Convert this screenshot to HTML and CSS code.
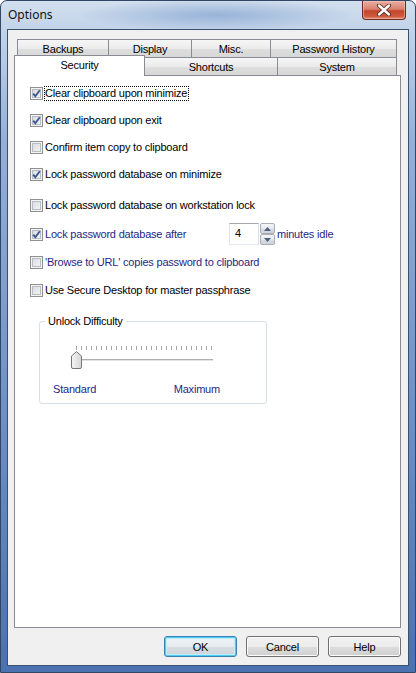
FILE: index.html
```html
<!DOCTYPE html>
<html>
<head>
<meta charset="utf-8">
<link rel="stylesheet" href="styles.css">
</head>
<body>
<div class="window">
  <div class="titlebar">
    <span class="title">Options</span>
    <div class="close">
      <svg width="16" height="12" viewBox="0 0 16 12">
        <path d="M3 1.5 L13 10.5 M13 1.5 L3 10.5" stroke="#5a2a22" stroke-width="4.2" stroke-linecap="round" fill="none"/>
        <path d="M3 1.5 L13 10.5 M13 1.5 L3 10.5" stroke="#ffffff" stroke-width="2.4" stroke-linecap="round" fill="none"/>
      </svg>
    </div>
  </div>
  <div class="client">
    <div class="tabs">
      <div class="tabrow back">
        <div class="tab w-backups">Backups</div>
        <div class="tab w-display">Display</div>
        <div class="tab w-misc">Misc.</div>
        <div class="tab w-history">Password History</div>
      </div>
      <div class="tabrow front">
        <div class="tab selected w-security">Security</div>
        <div class="tab w-shortcuts">Shortcuts</div>
        <div class="tab w-system">System</div>
      </div>
    </div>
    <div class="panel">
      <div class="opt r1"><span class="cb checked"><svg width="11" height="11" viewBox="0 0 11 11"><path d="M2.2 5.6 L4.3 8.2 L8.8 2.2" stroke="#3b5794" stroke-width="1.9" fill="none"/></svg></span><span class="lbl focus">Clear clipboard upon minimize</span></div>
      <div class="opt"><span class="cb checked"><svg width="11" height="11" viewBox="0 0 11 11"><path d="M2.2 5.6 L4.3 8.2 L8.8 2.2" stroke="#3b5794" stroke-width="1.9" fill="none"/></svg></span><span class="lbl">Clear clipboard upon exit</span></div>
      <div class="opt"><span class="cb"></span><span class="lbl">Confirm item copy to clipboard</span></div>
      <div class="opt"><span class="cb checked"><svg width="11" height="11" viewBox="0 0 11 11"><path d="M2.2 5.6 L4.3 8.2 L8.8 2.2" stroke="#3b5794" stroke-width="1.9" fill="none"/></svg></span><span class="lbl">Lock password database on minimize</span></div>
      <div class="opt r5"><span class="cb"></span><span class="lbl">Lock password database on workstation lock</span></div>
      <div class="opt r6"><span class="cb checked"><svg width="11" height="11" viewBox="0 0 11 11"><path d="M2.2 5.6 L4.3 8.2 L8.8 2.2" stroke="#3b5794" stroke-width="1.9" fill="none"/></svg></span><span class="lbl navy idle-lbl">Lock password database after</span>
        <div class="spin">
          <div class="edit">4</div>
          <div class="spinbtns">
            <div class="sb"><svg width="7" height="4" viewBox="0 0 7 4"><path d="M0 4 L3.5 0 L7 4 Z" fill="#4c607f"/></svg></div>
            <div class="sb"><svg width="7" height="4" viewBox="0 0 7 4"><path d="M0 0 L3.5 4 L7 0 Z" fill="#4c607f"/></svg></div>
          </div>
        </div>
        <span class="navy minutes">minutes idle</span>
      </div>
      <div class="opt r7"><span class="cb"></span><span class="lbl navy">'Browse to URL' copies password to clipboard</span></div>
      <div class="opt r8"><span class="cb"></span><span class="lbl">Use Secure Desktop for master passphrase</span></div>
      <fieldset class="group">
        <legend>Unlock Difficulty</legend>
        <div class="slider">
          <div class="ticks"></div>
          <div class="track"></div>
          <div class="thumb">
            <svg width="11" height="18" viewBox="0 0 11 18">
              <defs><linearGradient id="tg" x1="0" y1="0" x2="1" y2="0"><stop offset="0" stop-color="#f4f4f4"/><stop offset="1" stop-color="#d6d6d6"/></linearGradient></defs>
              <path d="M0.5 5 L5.5 0.6 L10.5 5 V16 Q10.5 17.5 9 17.5 H2 Q0.5 17.5 0.5 16 Z" fill="url(#tg)" stroke="#767676"/>
            </svg>
          </div>
        </div>
        <div class="slabels"><span class="navy">Standard</span><span class="navy">Maximum</span></div>
      </fieldset>
    </div>
    <div class="buttons">
      <div class="btn default">OK</div>
      <div class="btn">Cancel</div>
      <div class="btn">Help</div>
    </div>
  </div>
</div>
</body>
</html>
```

FILE: styles.css
```css
* { box-sizing: border-box; }
html, body { margin: 0; padding: 0; background: #ffffff; }
body {
  font-family: "Liberation Sans", Arial, sans-serif;
  font-size: 11px;
  letter-spacing: -0.2px;
  color: #000;
}
.window {
  width: 416px;
  height: 673px;
  border: 1px solid #324766;
  border-radius: 7px 7px 0 0;
  display: flex;
  flex-direction: column;
  background:
    radial-gradient(ellipse 140px 16px at 52% 14px, rgba(110,148,200,0.55), rgba(110,148,200,0) 100%),
    linear-gradient(180deg, #d2dfee 0px, #c3d4e9 28px, #93b0d8 140px, #6f92c6 400px, #4a71b0 672px);
  overflow: hidden;
}
.titlebar {
  height: 28px;
  display: flex;
  justify-content: space-between;
  align-items: flex-start;
}
.title {
  font-family: "Noto Sans", "Open Sans", sans-serif;
  font-size: 12px;
  letter-spacing: 0;
  padding: 5px 0 0 7px;
  color: #111;
}
.close {
  width: 44px;
  height: 19px;
  margin-right: 9px;
  border: 1px solid #6b2a22;
  border-top: none;
  border-radius: 0 0 4px 4px;
  background: linear-gradient(180deg, #e9ada0 0%, #d98270 45%, #c2452c 55%, #cf5a3e 85%, #e0917c 100%);
  display: flex;
  align-items: center;
  justify-content: center;
  box-shadow: inset 0 0 0 1px rgba(255,210,200,0.45);
}
.client {
  flex: 1;
  margin: 0 6px 6px;
  border: 1px solid #3b5070;
  background: #f0f0f0;
  display: flex;
  flex-direction: column;
  padding: 9px 7px 0 6px;
}
.tabs { display: flex; flex-direction: column; }
.tabrow { display: flex; height: 18px; }
.tabrow.back { margin-left: 3px; }
.tabrow.front { align-items: flex-end; }
.tab {
  height: 18px;
  border: 1px solid #898c95;
  border-bottom: none;
  margin-left: -1px;
  background: linear-gradient(180deg, #f6f6f6 0%, #ebebeb 50%, #dedede 52%, #d8d8d8 100%);
  display: flex;
  align-items: center;
  justify-content: center;
  padding-top: 1px;
}
.tab:first-child { margin-left: 0; }
.tab.selected {
  height: 21px;
  margin-top: -2px;
  margin-bottom: -1px;
  background: #ffffff;
  position: relative;
  z-index: 1;
  padding-top: 0;
  padding-bottom: 3px;
}
.w-backups { width: 92px; }
.w-display { width: 84px; }
.w-misc { width: 80px; }
.w-history { width: 127px; }
.w-security { width: 131px; }
.w-shortcuts { width: 134px; }
.w-system { width: 120px; }
.panel {
  flex: 1;
  background: #ffffff;
  border: 1px solid #898c95;
  padding: 9px 0 0 15px;
  display: flex;
  flex-direction: column;
}
.opt {
  display: flex;
  align-items: center;
  height: 16px;
  margin-top: 11px;
}
.opt.r1 { margin-top: 0; }
.opt.r5 { margin-top: 15px; }
.opt.r6 { margin-top: 10px; height: 22px; }
.opt.r7 { margin-top: 9px; }
.opt.r8 { margin-top: 12px; }
.cb {
  width: 13px;
  height: 13px;
  flex: none;
  border: 1px solid #8e8f8f;
  background: linear-gradient(135deg, #d2d5da 0%, #e6e8eb 50%, #f8f8f8 100%);
  box-shadow: inset 0 0 0 1px #f4f4f4, inset 0 0 0 2px #b9bdc3;
  margin-right: 1px;
  display: flex;
  align-items: center;
  justify-content: center;
}
.cb svg { display: block; }
.lbl {
  border: 1px solid transparent;
  line-height: 13px;
  padding: 0 1px 0 0;
  white-space: nowrap;
}
.lbl.focus { border: 1px dotted #000; }
.navy { color: #1f1f85; }
.idle-lbl { width: 185px; }
.spin { display: flex; align-items: stretch; height: 22px; }
.edit {
  width: 30px;
  height: 22px;
  border: 1px solid #abadb3;
  border-top-color: #a3a6ad;
  border-left-color: #e2e3ea;
  border-bottom-color: #e3e9ef;
  border-right-color: #dbdfe6;
  padding: 3px 0 0 5px;
  line-height: 13px;
  background: #fff;
}
.spinbtns {
  display: flex;
  flex-direction: column;
  justify-content: space-between;
  width: 15px;
  margin-left: 1px;
}
.sb {
  height: 11px;
  border: 1px solid #a8adb6;
  border-radius: 2px;
  background: linear-gradient(180deg, #f5f6f8 0%, #e6e8ec 50%, #d9dde3 51%, #cfd4db 100%);
  display: flex;
  align-items: center;
  justify-content: center;
}
.sb svg { display: block; }
.minutes { margin-left: 2px; }
.group {
  margin: 17px 0 0 9px;
  width: 228px;
  padding: 0 0 7px 0;
  border: 1px solid #d5dfe5;
  border-radius: 3px;
  min-width: 0;
}
.group legend {
  padding: 0 3px;
  margin-left: 5px;
  line-height: 13px;
}
.slider {
  position: relative;
  margin: 18px 0 0 31px;
  width: 145px;
  height: 24px;
}
.ticks {
  margin-left: 5px;
  width: 136px;
  height: 4px;
  background: repeating-linear-gradient(90deg, #a7a7a7 0px, #a7a7a7 1px, transparent 1px, transparent 5px);
}
.track {
  margin: 9px 0 0 5px;
  width: 137px;
  height: 2px;
  background: linear-gradient(180deg, #b0b0b0 0, #b0b0b0 1px, #e3e3e3 1px);
}
.thumb {
  position: absolute;
  left: 0;
  top: 5px;
  width: 11px;
  height: 18px;
}
.thumb svg { display: block; }
.slabels {
  display: flex;
  justify-content: space-between;
  width: 167px;
  margin: 13px 0 0 13px;
  line-height: 13px;
}
.buttons {
  display: flex;
  justify-content: flex-end;
  gap: 9px;
  padding: 8px 0 8px 0;
}
.btn {
  width: 73px;
  height: 21px;
  border: 1px solid #707070;
  border-radius: 3px;
  background: linear-gradient(180deg, #f2f2f2 0%, #ebebeb 50%, #dddddd 51%, #cfcfcf 100%);
  box-shadow: inset 0 0 0 1px #fcfcfc;
  display: flex;
  align-items: center;
  justify-content: center;
}
.btn.default {
  border-color: #3c7fb1;
  box-shadow: inset 0 0 0 1px #48d0f7, inset 0 0 0 2px #c5eafa;
  background: linear-gradient(180deg, #eef3f6 0%, #e5ebef 50%, #d6dee3 51%, #cdd5da 100%);
}
```
